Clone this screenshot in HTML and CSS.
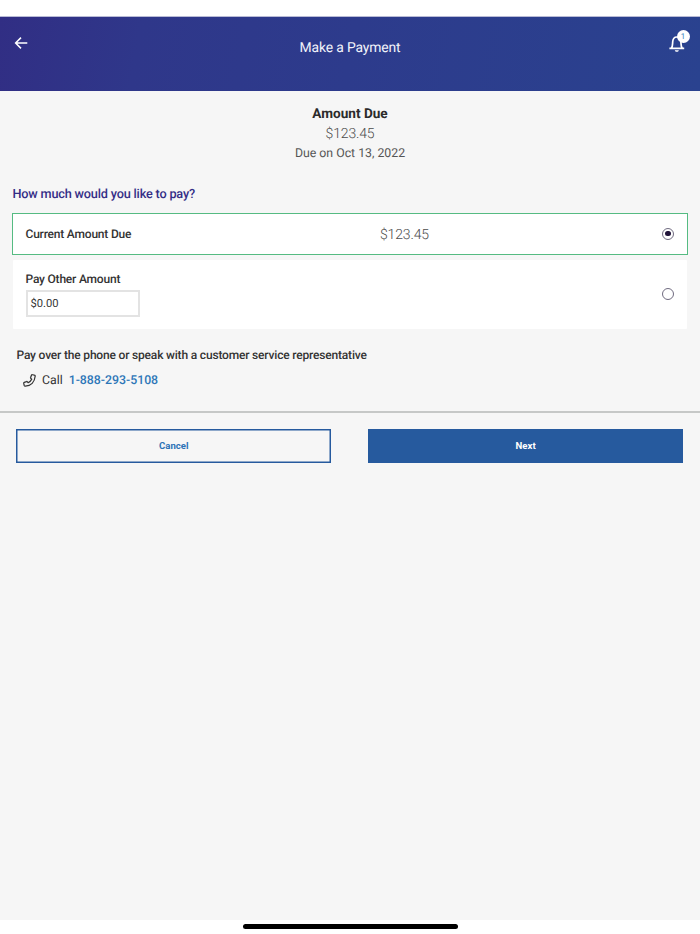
FILE: index.html
```html
<!DOCTYPE html>
<html lang="en">
<head>
<meta charset="utf-8">
<title>Make a Payment</title>
<link rel="stylesheet" href="styles.css">
</head>
<body>
<div class="screen">
  <header class="header">
    <svg class="back" viewBox="0 0 14 14"><path d="M13.3 7H1.7M7 1.6L1.6 7L7 12.4"/></svg>
    <h1 class="title">Make a Payment</h1>
    <div class="bell-wrap">
      <svg class="bell" viewBox="0 0 16 18"><path d="M2.4 14C3.8 12.3 3.5 10.2 3.7 7.8C3.9 4.9 5.4 3 7.8 3S11.7 4.9 11.9 7.8C12.1 10.2 11.8 12.3 13.2 14M.4 14.4H15.2"/><path class="clapper" d="M5.8 16.2h4c-.3 2.2-3.7 2.2-4 0z"/></svg>
      <span class="badge">1</span>
    </div>
  </header>
  <main class="content">
    <section class="due">
      <h2 class="due-title">Amount Due</h2>
      <p class="due-amount">$123.45</p>
      <p class="due-date">Due on Oct 13, 2022</p>
    </section>
    <h3 class="question">How much would you like to pay?</h3>
    <section class="options">
      <div class="option selected">
        <span class="label">Current Amount Due</span>
        <span class="amount">$123.45</span>
        <span class="radio checked"></span>
      </div>
      <div class="option other">
        <div class="entry">
          <span class="label">Pay Other Amount</span>
          <div class="field"><span class="value">$0.00</span></div>
        </div>
        <span class="radio"></span>
      </div>
    </section>
    <section class="phone">
      <p class="phone-title">Pay over the phone or speak with a customer service representative</p>
      <div class="call">
        <svg class="handset" viewBox="0 0 14 14"><path d="M10.1.8L12.3 1.3C12.9 1.4 13.2 1.9 13.1 2.5C12.6 8.5 8.5 12.7 2.5 13.1C1.9 13.2 1.5 12.8 1.3 12.3L.8 10.2C.7 9.7 .9 9.3 1.4 9.1L3.7 8.2C4.1 8 4.5 8.1 4.8 8.5L5.6 9.4C7.3 8.5 8.6 7.2 9.4 5.6L8.5 4.8C8.1 4.5 8 4.1 8.2 3.7L9.1 1.4C9.3.9 9.6.7 10.1.8Z"/></svg>
        <span class="call-text">Call</span>
        <a class="number">1-888-293-5108</a>
      </div>
    </section>
    <div class="actions">
      <button class="btn cancel">Cancel</button>
      <button class="btn next">Next</button>
    </div>
  </main>
  <footer class="home"><div class="bar"></div></footer>
</div>
</body>
</html>
```
FILE: styles.css
```css
* { box-sizing: border-box; margin: 0; padding: 0; }
body { background: #fff; font-family: Roboto, "Liberation Sans", sans-serif; color: #333; text-rendering: geometricPrecision; }
.screen { height: 934px; padding-top: 16px; display: flex; flex-direction: column; overflow: hidden; }

.header {
  height: 75px; flex: none; display: grid; grid-template-columns: 80px 1fr 80px; align-items: start;
  background: linear-gradient(100deg, #312e84 0%, #2f378a 20%, #2d3b8c 50%, #2a428f 100%);
  border-top: 1px solid #b9bbd6;
}
.back { width: 14px; height: 14px; margin: 19px 0 0 14px; fill: none; stroke: #fff; stroke-width: 1.5; }
.title { margin-top: 21px; text-align: center; font-size: 13.9px; line-height: 20px; font-weight: 400; letter-spacing: -.15px; color: #f2f3fa; }
.bell-wrap { position: relative; width: 16px; height: 18px; margin: 17px 0 0 49px; justify-self: start; }
.bell { display: block; width: 16px; height: 18px; fill: none; stroke: #fff; stroke-width: 1.7; }
.bell .clapper { fill: #fff; stroke: none; }
.badge {
  position: absolute; left: 7.5px; top: -4px; width: 13px; height: 13px; border-radius: 50%;
  background: #fff; color: #3b82bd; font-size: 8px; line-height: 13px; text-align: center;
}

.content { flex: 1; background: #f6f6f6; display: flex; flex-direction: column; }
.due { padding-top: 13px; text-align: center; }
.due-title { font-size: 13.6px; line-height: 20px; font-weight: 700; color: #2b2b2b; }
.due-amount { font-size: 14px; line-height: 21px; font-weight: 300; letter-spacing: -.15px; color: #4c4c4c; }
.due-date { font-size: 12.3px; line-height: 18px; color: #555; }

.question { margin: 23px 0 0 12.5px; font-size: 12.7px; line-height: 18px; font-weight: 500; letter-spacing: -.18px; color: #342e86; }
.options { margin: 9px 12px 0; display: flex; flex-direction: column; gap: 5px; }
.option { background: #fff; display: grid; align-items: center; grid-template-columns: 354.5px 1fr 12px; }
.selected { height: 42px; padding: 0 13px 1px 12.5px; border: 1px solid #55bb82; }
.label { display: block; font-size: 12px; line-height: 16px; font-weight: 500; letter-spacing: -.2px; color: #333; }
.amount { padding-top: 2px; font-size: 14px; font-weight: 300; letter-spacing: -.15px; color: #4c4c4c; }
.radio { width: 12px; height: 12px; border: 1px solid #706b80; border-radius: 50%; display: grid; place-items: center; }
.checked::after { content: ""; width: 5.6px; height: 5.6px; border-radius: 50%; background: #21143a; }
.other { height: 69px; margin: 0 1px; padding: 0 13px 1px 12.5px; border-radius: 1px; grid-template-columns: 1fr 12px; }
.entry { align-self: start; padding-top: 11px; }
.field { width: 114.5px; height: 27px; margin-top: 3px; padding: 0 3px; border: 2px solid #e3e3e3; display: flex; align-items: center; }
.value { font-size: 11.2px; color: #333; }

.phone { padding: 17px 16.5px 0; }
.phone-title { font-size: 12px; line-height: 18px; font-weight: 500; letter-spacing: -.18px; color: #333; }
.call { display: flex; align-items: center; height: 18px; margin-top: 8px; padding-left: 6.5px; font-size: 12.3px; }
.handset { width: 13px; height: 13px; margin-bottom: 2px; fill: none; stroke: #333; stroke-width: 1.35; stroke-linejoin: round; }
.call-text { margin-left: 6px; }
.number { margin-left: 6px; font-weight: 500; color: #2d77b8; }

.actions { margin-top: 21px; padding: 16px 17px 0 16.4px; border-top: 2px solid #c6c8c7; display: grid; grid-template-columns: 1fr 1fr; gap: 37px; }
.btn { height: 34px; padding-bottom: 1px; font-family: inherit; font-size: 9.6px; font-weight: 700; border: 1px solid #265a9e; border-radius: 0; }
.cancel { background: transparent; color: #2d73b6; box-shadow: inset 0 0 0 .5px #265a9e; }
.next { background: #265a9e; color: #fff; }

.home { height: 14px; flex: none; padding-top: 4px; background: #fff; }
.bar { width: 215px; height: 5px; margin: 0 auto; border-radius: 3px; background: #000; }
```
